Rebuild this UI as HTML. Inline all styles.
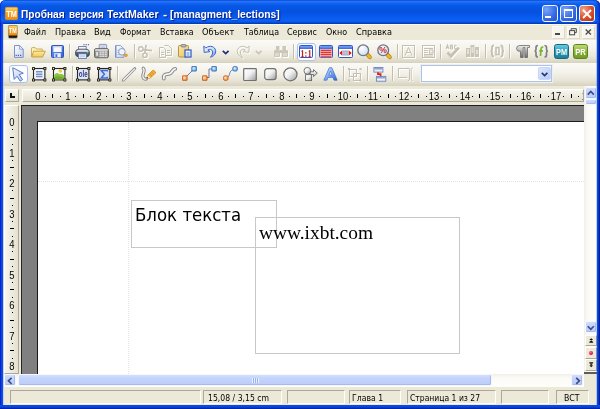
<!DOCTYPE html>
<html lang="ru">
<head>
<meta charset="utf-8">
<title>TextMaker</title>
<style>
html,body{margin:0;padding:0;}
body{width:600px;height:409px;overflow:hidden;background:#ece9d8;font-family:"DejaVu Sans Condensed","DejaVu Sans","Liberation Sans",sans-serif;font-size:11px;color:#000;}
#win{will-change:transform;position:relative;width:600px;height:409px;overflow:hidden;background:#ece9d8;}
.abs{position:absolute;}
svg{position:absolute;overflow:visible;}
.tw{display:inline-block;vertical-align:top;height:14px;}
.sx{display:inline-block;transform-origin:0 0;white-space:nowrap;}
#bl{left:0;top:23px;width:4px;height:386px;background:linear-gradient(to right,#0424d2 0,#0424d2 1px,#0a44e4 1px,#0a44e4 2px,#0c4ee8 2px,#0c4ee8 3px,rgba(12,78,232,0.15) 3px);}
#br{left:596px;top:23px;width:4px;height:386px;background:linear-gradient(to right,rgba(12,78,232,0.25) 0,rgba(12,78,232,0.25) 1px,#0a48e8 1px,#0a48e8 2px,#0838c8 2px,#0838c8 3px,#001c98 3px);}
#bb{left:0;top:404.6px;width:600px;height:4.4px;background:linear-gradient(to bottom,#0a4ae8 0,#0a48e4 35%,#0838c8 65%,#001c98 100%);}
#title{left:0;top:0;width:600px;height:23.5px;border-radius:5.5px 5.5px 0 0;box-shadow:inset 1px 0 0 #0831d9,inset -1px 0 0 #0a30c0,inset -3px 0 2px -1px #0a3cc8;
background:linear-gradient(to bottom,#0a46d6 0%,#2474f8 6%,#1a6cf6 10%,#0c5eec 18%,#0656e4 28%,#0551e0 50%,#0858ea 68%,#0b62f4 86%,#0a58e6 91%,#0844c4 96%,#0836ac 100%);}
.ttext{top:7px;color:#fff;font-family:"Liberation Sans",sans-serif;font-weight:bold;font-size:11.5px;white-space:nowrap;text-shadow:1px 1px 1px #0a1883;line-height:14px;}
.cb{top:5px;width:16.5px;height:16.5px;border:1px solid #f4f7ff;border-radius:3px;box-sizing:border-box;background:radial-gradient(circle at 25% 25%,#7aa6fa 0,#3a6ee6 55%,#2450cc 100%);}
#cclose{background:radial-gradient(circle at 25% 25%,#f0a58e 0,#da5330 50%,#b8310f 100%);}
#menu{left:3px;top:23.5px;width:594px;height:16.5px;background:#ece9d8;border-top:1px solid #f8f7f0;box-sizing:border-box;}
.mi{top:25px;font-size:9.2px;line-height:13px;white-space:nowrap;}
.tb{left:3px;width:594px;background:linear-gradient(to bottom,#fbfaf7 0,#f3f1e8 45%,#e8e5d7 75%,#d6d2bf 100%);}
#tb1{top:40px;height:23px;}
#tb2{top:63px;height:23px;}
.sep{width:1px;height:15px;background:#c2bfae;border-right:1px solid #fbfaf6;}
#rulerrow{left:3px;top:86px;width:594px;height:19px;background:#ece9d8;}
#hruler{left:22px;top:89px;width:562px;height:13px;background:linear-gradient(to bottom,#f7f6ee,#e4e1d0);border:1px solid #fff;border-right-color:#aca899;border-bottom-color:#aca899;box-sizing:border-box;overflow:hidden;}
#vruler{left:4px;top:105px;width:15px;height:269px;background:linear-gradient(to right,#f7f6ee,#e4e1d0);border:1px solid #fff;border-right-color:#aca899;border-bottom-color:#aca899;box-sizing:border-box;overflow:hidden;}
#lbtn{left:5px;top:89px;width:14px;height:13px;background:linear-gradient(to bottom,#f7f6ee,#e4e1d0);border:1px solid #fff;border-right-color:#aca899;border-bottom-color:#aca899;box-sizing:border-box;}
.rn{font-family:"Liberation Sans",sans-serif;font-size:10.5px;line-height:10px;color:#000;white-space:nowrap;text-align:center;width:20px;transform:scaleX(0.9);}
#gray{left:21px;top:105px;width:563px;height:269px;background:#808080;border-left:1px solid #262626;border-top:1px solid #1c1c1c;box-sizing:border-box;}
#page{left:37px;top:121px;width:547px;height:253px;background:#fff;border-left:1px solid #1a1a1a;border-top:1px solid #1a1a1a;box-sizing:border-box;}
#vs{left:584px;top:86px;width:13px;height:288px;background:linear-gradient(to right,#f1efe8 0,#fbfaf6 30%,#fefefb 100%);}
#hs{left:4px;top:374px;width:580px;height:13px;background:linear-gradient(to bottom,#f1efe8 0,#fbfaf6 30%,#fefefb 100%);}
.sbtn{background:linear-gradient(to bottom,#d2defd 0,#c4d3fb 35%,#bccdf8 100%);border:1px solid #f4f7ff;border-radius:2px;box-sizing:border-box;box-shadow:inset -1px -1px 0 #a6baee;}
#status{left:3px;top:387px;width:594px;height:18px;background:#ece9d8;}
.sp{top:390px;height:14px;border:1px solid #aca899;border-right-color:#fff;border-bottom-color:#fff;box-sizing:border-box;font-size:9.8px;line-height:12px;padding-left:0;white-space:nowrap;overflow:hidden;}
.st{top:391.6px;font-size:9.3px;line-height:12px;white-space:nowrap;}
.fr{border:1px solid #c8c8c8;box-sizing:border-box;}
.selbtn{box-sizing:border-box;border:1px solid #a9c1f0;border-radius:3px;background:#fdfdff;}
.ic{position:absolute;overflow:visible;}
.mdi{top:25.7px;width:13px;height:13px;box-sizing:border-box;background:#f6f5ee;border:1px solid #fbfaf6;border-right-color:#dcd9c8;border-bottom-color:#dcd9c8;}
</style>
</head>
<body>
<div id="win">
<div class="abs" style="left:0;top:0;width:600px;height:8px;background:#fff"></div>
<div id="title" class="abs"></div>
<div class="abs ttext" style="left:21px;width:400px;height:14px"><span class="tw" style="width:44.3px"><span class="sx ttx" style="transform:scaleX(0.883)">Пробная</span></span> <span class="tw" style="width:35.4px"><span class="sx ttx" style="transform:scaleX(0.859)">версия</span></span> <span class="tw" style="width:52.8px"><span class="sx ttx" style="transform:scaleX(0.921)">TextMaker</span></span> <span class="tw" style="width:3.8px"><span class="sx ttx" style="transform:scaleX(1.094)">-</span></span> <span class="tw" style="width:108.9px"><span class="sx ttx" style="transform:scaleX(0.899)">[managment_lections]</span></span></div>
<div id="menu" class="abs"></div>
<div class="abs cb" style="left:541.5px"></div>
<div class="abs cb" style="left:560px"></div>
<div class="abs cb" id="cclose" style="left:578.5px"></div>
<div class="abs" style="left:545px;top:15.5px;width:6px;height:2.4px;background:#fff"></div>
<div class="abs" style="left:563.5px;top:8.5px;width:9px;height:9px;box-sizing:border-box;border:1px solid #fff;border-top-width:2.4px"></div>
<svg class="ic" style="left:582px;top:8.5px" width="10" height="10" viewBox="0 0 10 10"><path d="M1 1L9 9M9 1L1 9" stroke="#fff" stroke-width="1.9"/></svg>
<svg class="ic" style="left:5px;top:6.5px" width="13" height="13" viewBox="0 0 13 13"><defs><linearGradient id="gtm" x1="0" y1="0" x2="0" y2="1"><stop offset="0" stop-color="#fdd36a"/><stop offset="0.45" stop-color="#f9a424"/><stop offset="1" stop-color="#f08c10"/></linearGradient></defs><rect x="0.3" y="0.3" width="12.4" height="12.4" rx="1.4" fill="url(#gtm)" stroke="#e89018" stroke-width="0.6"/><text x="6.5" y="10.3" font-family="Liberation Sans,sans-serif" font-weight="bold" font-size="9.5" fill="#fff" text-anchor="middle" textLength="10.6" lengthAdjust="spacingAndGlyphs">TM</text></svg>
<svg class="ic" style="left:7.7px;top:25.2px" width="10" height="14" viewBox="0 0 10 14"><rect x="0.3" y="0.3" width="9.2" height="13" rx="1.4" fill="#1a1a1a" stroke="#b8b8b0" stroke-width="0.6"/><rect x="0.6" y="0.8" width="8.6" height="9.6" rx="1" fill="url(#gtm)"/><text x="4.9" y="8.4" font-family="Liberation Sans,sans-serif" font-weight="bold" font-size="7" fill="#fff" text-anchor="middle" textLength="7.6" lengthAdjust="spacingAndGlyphs">TM</text></svg>
<div class="abs mdi" style="left:551.5px"></div><div class="abs mdi" style="left:567px"></div><div class="abs mdi" style="left:582px"></div>
<div class="abs" style="left:555px;top:33.3px;width:5px;height:1.6px;background:#4a4a4a"></div>
<svg class="ic" style="left:569px;top:27.8px" width="8" height="8" viewBox="0 0 8 8"><path d="M2.2 2V0.7H7.3V4.6H5.6" fill="none" stroke="#4a4a4a" stroke-width="1"/><rect x="0.6" y="2.6" width="5" height="4.2" fill="none" stroke="#4a4a4a" stroke-width="1"/></svg>
<svg class="ic" style="left:585.3px;top:29px" width="7" height="6" viewBox="0 0 7 6"><path d="M0.7 0.5L5.9 5.5M5.9 0.5L0.7 5.5" stroke="#4a4a4a" stroke-width="1.35"/></svg>
<div class="abs mi" style="left:24.0px;top:24.6px;"><span class="sx" style="transform:scaleX(0.964)">Файл</span></div>
<div class="abs mi" style="left:54.7px;top:24.6px;"><span class="sx" style="transform:scaleX(0.981)">Правка</span></div>
<div class="abs mi" style="left:94.0px;top:24.6px;"><span class="sx" style="transform:scaleX(1.007)">Вид</span></div>
<div class="abs mi" style="left:119.7px;top:24.6px;"><span class="sx" style="transform:scaleX(0.92)">Формат</span></div>
<div class="abs mi" style="left:159.7px;top:24.6px;"><span class="sx" style="transform:scaleX(0.96)">Вставка</span></div>
<div class="abs mi" style="left:202.4px;top:24.6px;"><span class="sx" style="transform:scaleX(0.996)">Объект</span></div>
<div class="abs mi" style="left:244.0px;top:24.6px;"><span class="sx" style="transform:scaleX(0.957)">Таблица</span></div>
<div class="abs mi" style="left:287.4px;top:24.6px;"><span class="sx" style="transform:scaleX(0.965)">Сервис</span></div>
<div class="abs mi" style="left:326.4px;top:24.6px;"><span class="sx" style="transform:scaleX(0.965)">Окно</span></div>
<div class="abs mi" style="left:356.4px;top:24.6px;"><span class="sx" style="transform:scaleX(0.988)">Справка</span></div>
<div id="tb1" class="abs tb"></div>
<div id="tb2" class="abs tb"></div>
<svg width="0" height="0" style="position:absolute"><defs>
<linearGradient id="gdoc" x1="0" y1="0" x2="1" y2="1"><stop offset="0" stop-color="#ffffff"/><stop offset="1" stop-color="#c3d2f2"/></linearGradient>
<linearGradient id="gfold" x1="0" y1="0" x2="0" y2="1"><stop offset="0" stop-color="#fdee9e"/><stop offset="1" stop-color="#f1c652"/></linearGradient>
<linearGradient id="gsave" x1="0" y1="0" x2="1" y2="1"><stop offset="0" stop-color="#6a98f4"/><stop offset="1" stop-color="#3560cc"/></linearGradient>
<linearGradient id="gshape" x1="0" y1="0" x2="1" y2="1"><stop offset="0" stop-color="#ffffff"/><stop offset="0.45" stop-color="#f2f2f2"/><stop offset="1" stop-color="#9a9a9a"/></linearGradient>
<linearGradient id="gmetal" x1="0" y1="0" x2="0" y2="1"><stop offset="0" stop-color="#f0f0f0"/><stop offset="0.5" stop-color="#acacac"/><stop offset="1" stop-color="#686868"/></linearGradient>
<linearGradient id="gpm" x1="0" y1="0" x2="0" y2="1"><stop offset="0" stop-color="#6cd0e4"/><stop offset="0.5" stop-color="#2c9cb8"/><stop offset="1" stop-color="#1e7c94"/></linearGradient>
<linearGradient id="gpr" x1="0" y1="0" x2="0" y2="1"><stop offset="0" stop-color="#c4dc78"/><stop offset="0.5" stop-color="#8cb43c"/><stop offset="1" stop-color="#6c9824"/></linearGradient>
<linearGradient id="gwin" x1="0" y1="0" x2="0" y2="1"><stop offset="0" stop-color="#7aa6fa"/><stop offset="1" stop-color="#3a68dc"/></linearGradient>
<radialGradient id="glens" cx="0.35" cy="0.3" r="0.8"><stop offset="0" stop-color="#ffffff"/><stop offset="1" stop-color="#c8dcf4"/></radialGradient>
<linearGradient id="gA" x1="0" y1="0" x2="1" y2="1"><stop offset="0" stop-color="#e0ecff"/><stop offset="0.5" stop-color="#7cacf4"/><stop offset="1" stop-color="#2c5cc4"/></linearGradient>
<radialGradient id="gor" cx="0.4" cy="0.4" r="0.7"><stop offset="0" stop-color="#ffe8b8"/><stop offset="1" stop-color="#ec7c30"/></radialGradient>
<radialGradient id="gbl" cx="0.4" cy="0.4" r="0.7"><stop offset="0" stop-color="#d8f4ff"/><stop offset="1" stop-color="#4ca0e8"/></radialGradient>
<linearGradient id="gundo" x1="0" y1="0" x2="1" y2="1"><stop offset="0" stop-color="#ffffff"/><stop offset="0.55" stop-color="#c4dafa"/><stop offset="1" stop-color="#6c9cec"/></linearGradient>
<linearGradient id="garrow" x1="0" y1="0" x2="1" y2="1"><stop offset="0" stop-color="#f4f8ff"/><stop offset="1" stop-color="#b0c6f0"/></linearGradient>
<linearGradient id="gclip" x1="0" y1="0" x2="1" y2="1"><stop offset="0" stop-color="#fbeaa6"/><stop offset="1" stop-color="#e6c062"/></linearGradient>
<linearGradient id="gprn" x1="0" y1="0" x2="0" y2="1"><stop offset="0" stop-color="#f2f4f8"/><stop offset="0.3" stop-color="#d0d4de"/><stop offset="0.42" stop-color="#5c6478"/><stop offset="1" stop-color="#424a5e"/></linearGradient>
<linearGradient id="gcombo" x1="0" y1="0" x2="0" y2="1"><stop offset="0" stop-color="#dbe6fe"/><stop offset="1" stop-color="#b4c8f8"/></linearGradient>
</defs></svg>
<svg class="ic" style="left:13.6px;top:45px" width="10" height="13" viewBox="0 0 10 13" ><path d="M0.5 0.5H5.6L9.2 4.2V12.4H0.5Z" fill="url(#gdoc)" stroke="#7f8fc6"/><path d="M5.6 0.5V4.2H9.2Z" fill="#f6f8ff" stroke="#7f8fc6" stroke-width="0.8" stroke-linejoin="round"/><path d="M1.6 10.4h6.6" stroke="#4a5aa0" stroke-width="1.2" stroke-dasharray="1.2 1"/></svg>
<svg class="ic" style="left:30.5px;top:46.6px" width="15" height="11" viewBox="0 0 15 11" ><path d="M0.5 9.5V1.5Q0.5 0.6 1.4 0.6H4.2L5.4 2H11.2V4.2" fill="#fdf1b6" stroke="#c9a352" stroke-width="0.9"/><path d="M0.7 10L2.6 4.2H14.3L11.6 10Z" fill="url(#gfold)" stroke="#c39a3c" stroke-width="0.9" stroke-linejoin="round"/></svg>
<svg class="ic" style="left:51px;top:45px" width="13" height="13" viewBox="0 0 13 13" ><rect x="0.5" y="0.5" width="12" height="12" rx="1" fill="url(#gsave)" stroke="#2f55bc"/><rect x="2.4" y="1" width="8.2" height="6" fill="#f6f8fc"/><rect x="2.4" y="1" width="8.2" height="1.4" fill="#ccd2de"/><rect x="3.2" y="8.2" width="6.6" height="4.3" fill="#eef2fa"/><rect x="4.4" y="9.2" width="2" height="2.8" fill="#4a74d8"/></svg>
<div class="abs sep" style="left:69px;top:44px"></div>
<svg class="ic" style="left:75px;top:44px" width="15" height="15" viewBox="0 0 15 15" ><path d="M8.4 0.8h1.2M10.6 0.8h1.2M12.8 0.8h1.2" stroke="#34509c" stroke-width="1.1"/><rect x="3.6" y="2.6" width="7.6" height="4" fill="#f4f7fd" stroke="#5c6c9c" stroke-width="0.8"/><rect x="0.5" y="5.2" width="14" height="7.6" rx="3.4" fill="url(#gprn)" stroke="#3a4258" stroke-width="0.9"/><rect x="3.4" y="9.8" width="8" height="4.6" fill="#e6eefb" stroke="#5470b8" stroke-width="0.8"/><rect x="4.6" y="11.2" width="5.6" height="2" fill="#c4d2ee"/><rect x="11.6" y="8" width="1.6" height="1.3" fill="#48c848"/></svg>
<svg class="ic" style="left:94.4px;top:44px" width="15" height="14.2" viewBox="0 0 15 14.2" ><rect x="5.2" y="0.4" width="7.4" height="6" rx="0.6" fill="#dfe7f4" stroke="#7c86a0" stroke-width="0.8"/><path d="M6.6 2h4.6M6.6 3.6h4.6" stroke="#aab4cc" stroke-width="0.7"/><rect x="0.5" y="4.6" width="14" height="9.2" rx="1.6" fill="#9c9c9c" stroke="#5e5e5e" stroke-width="0.9"/><rect x="1" y="5" width="13" height="2" rx="1" fill="#cfcfcf"/><rect x="1.8" y="7.6" width="2.6" height="4.6" rx="0.6" fill="#ececec" stroke="#6a6a6a" stroke-width="0.5"/><g fill="#dcdcdc"><rect x="5.6" y="7.4" width="2" height="1.5"/><rect x="8.2" y="7.4" width="2" height="1.5"/><rect x="10.8" y="7.4" width="2" height="1.5"/><rect x="5.6" y="9.5" width="2" height="1.5"/><rect x="8.2" y="9.5" width="2" height="1.5"/><rect x="10.8" y="9.5" width="2" height="1.5"/><rect x="5.6" y="11.6" width="2" height="1.5"/><rect x="8.2" y="11.6" width="2" height="1.5"/><rect x="10.8" y="11.6" width="2" height="1.5"/></g></svg>
<svg class="ic" style="left:115px;top:45px" width="13" height="13.4" viewBox="0 0 13 13.4" ><path d="M0.5 0.5H5.6L9 3.9V12.4H0.5Z" fill="url(#gdoc)" stroke="#8797c4" stroke-width="0.9"/><path d="M1 1V12" stroke="#5878c8" stroke-width="0.8"/><path d="M2.4 5.5h2.4M2.4 7.5h2M2.4 9.5h2.6" stroke="#a8b4d4" stroke-width="0.8"/><circle cx="6.9" cy="6.8" r="3.3" fill="#eef5ff" stroke="#8494b8" stroke-width="0.9"/><circle cx="11" cy="10.3" r="1.4" fill="#f4a820" stroke="#c88010" stroke-width="0.5"/></svg>
<div class="abs sep" style="left:134px;top:44px"></div>
<svg class="ic" style="left:138px;top:44px" width="15" height="15" viewBox="0 0 15 15" ><g transform="translate(1,1)" stroke="#ffffff" fill="none"><circle cx="2.8" cy="5" r="2.2" stroke-width="1.4"/><circle cx="7" cy="11.2" r="2.2" stroke-width="1.4"/><path d="M4.8 5.6L14 6.6M6.8 9L8.2 0.8" stroke-width="1.6"/></g><g stroke="#c4c1b0" fill="none"><circle cx="2.8" cy="5" r="2.2" stroke-width="1.4"/><circle cx="7" cy="11.2" r="2.2" stroke-width="1.4"/><path d="M4.8 5.6L14 6.6M6.8 9L8.2 0.8" stroke-width="1.6"/></g></svg>
<svg class="ic" style="left:159px;top:45px" width="13" height="13" viewBox="0 0 13 13" ><g transform="translate(1,1)" stroke="#ffffff" fill="none"><path d="M0.5 2.5H4.5L6.5 4.5V12.5H0.5Z"/><path d="M5.5 0.5H9.5L12.5 3.5V10.5H6.5"/><path d="M2 7.5h3M2 9.5h3M8 5.5h3M8 7.5h3"/></g><g stroke="#c4c1b0" fill="none"><path d="M0.5 2.5H4.5L6.5 4.5V12.5H0.5Z"/><path d="M5.5 0.5H9.5L12.5 3.5V10.5H6.5"/><path d="M2 7.5h3M2 9.5h3M8 5.5h3M8 7.5h3"/></g></svg>
<svg class="ic" style="left:178px;top:44px" width="14" height="14" viewBox="0 0 14 14" ><rect x="0.5" y="1.5" width="10" height="11.5" rx="1" fill="url(#gclip)" stroke="#b8923c"/><rect x="3" y="0.5" width="5" height="2.5" rx="1" fill="#b8b8c0" stroke="#70707c" stroke-width="0.7"/><rect x="7" y="6" width="6" height="7" fill="#f2f6ff" stroke="#3463cc" stroke-width="1.3"/><path d="M8.6 9h2.8M8.6 11h2.8" stroke="#3463cc" stroke-width="0.8"/></svg>
<svg class="ic" style="left:203px;top:45px" width="14" height="13" viewBox="0 0 14 13" ><path d="M0.8 1.2L1.2 7.4L7 6.6L4.8 4.9C7.5 3.4 10 5 9.6 8C9.3 10 8.2 11.2 7.4 12.2C10.5 11.5 13 9 12.6 5.6C12.1 1.6 7 -0.2 2.9 3Z" fill="url(#gundo)" stroke="#3462cc" stroke-width="1" stroke-linejoin="round"/></svg>
<svg class="ic" style="left:222px;top:50px" width="8" height="5" viewBox="0 0 8 5" ><path d="M0.8 0.8L3.7 3.6L6.6 0.8" fill="none" stroke="#1c2f7c" stroke-width="1.7"/></svg>
<svg class="ic" style="left:236px;top:45px" width="15" height="14" viewBox="0 0 15 14" ><g transform="translate(1,1)" stroke="#ffffff" fill="none"><path d="M13.2 1.2L12.8 7.4L7 6.6L9.2 4.9C6.5 3.4 4 5 4.4 8C4.7 10 5.8 11.2 6.6 13C3.5 11.5 1 9 1.4 5.6C1.9 1.6 7 -0.2 11.1 3Z"/></g><g stroke="#c4c1b0" fill="none"><path d="M13.2 1.2L12.8 7.4L7 6.6L9.2 4.9C6.5 3.4 4 5 4.4 8C4.7 10 5.8 11.2 6.6 13C3.5 11.5 1 9 1.4 5.6C1.9 1.6 7 -0.2 11.1 3Z"/></g></svg>
<svg class="ic" style="left:255px;top:50px" width="8" height="5" viewBox="0 0 8 5" ><path d="M0.8 0.8L3.7 3.6L6.6 0.8" fill="none" stroke="#c9c6b6" stroke-width="1.7"/></svg>
<svg class="ic" style="left:274px;top:46px" width="15" height="12" viewBox="0 0 15 12" ><g transform="translate(1,1)" fill="#ffffff"><rect x="0" y="4" width="6" height="7"/><rect x="8" y="4" width="6" height="7"/><rect x="2" y="0" width="3.5" height="4"/><rect x="8.5" y="0" width="3.5" height="4"/></g><g fill="#cbc8b8"><rect x="0" y="4" width="6" height="7" rx="1"/><rect x="8" y="4" width="6" height="7" rx="1"/><rect x="2" y="0" width="3.5" height="4"/><rect x="8.5" y="0" width="3.5" height="4"/><rect x="6" y="4" width="2" height="3"/></g><rect x="1" y="7" width="4" height="3" fill="#dcdacc"/><rect x="9" y="7" width="4" height="3" fill="#dcdacc"/></svg>
<div class="abs sep" style="left:293px;top:44px"></div>
<div class="abs selbtn" style="left:297px;top:43px;width:19px;height:18px"></div>
<svg class="ic" style="left:299px;top:45px" width="14" height="13" viewBox="0 0 14 13" ><rect x="0.5" y="0.5" width="13" height="12" rx="1" fill="#fff" stroke="#3158c2"/><rect x="1" y="1" width="12" height="3" fill="url(#gwin)"/><text x="7" y="11.6" font-family="Liberation Serif,serif" font-weight="bold" font-size="9.5" fill="#d81818" text-anchor="middle" textLength="11.4" lengthAdjust="spacingAndGlyphs">1:1</text></svg>
<svg class="ic" style="left:319px;top:45px" width="14" height="13" viewBox="0 0 14 13" ><rect x="0.5" y="0.5" width="13" height="12" rx="1" fill="#fff" stroke="#3158c2"/><rect x="1" y="1" width="12" height="3" fill="url(#gwin)"/><rect x="1" y="4" width="12" height="8.2" fill="#f6c4c4"/><path d="M1.6 5.4h10.8M1.6 7.4h10.8M1.6 9.4h10.8M1.6 11.3h10.8" stroke="#e23434" stroke-width="1.1"/></svg>
<svg class="ic" style="left:338px;top:45px" width="15" height="13" viewBox="0 0 15 13" ><rect x="0.5" y="0.5" width="14" height="12" rx="1" fill="#fff" stroke="#3158c2"/><rect x="1" y="1" width="13" height="3" fill="url(#gwin)"/><rect x="4.6" y="5.2" width="5.8" height="5.8" fill="#e4e8f0"/><path d="M4.8 6.2h5.4M4.8 8h5.4M4.8 9.8h5.4" stroke="#8c94ac" stroke-width="0.9"/><path d="M1.3 8L4.3 5.3V10.7Z" fill="#e01818"/><path d="M13.7 8L10.7 5.3V10.7Z" fill="#e01818"/></svg>
<svg class="ic" style="left:357px;top:44px" width="15" height="15" viewBox="0 0 15 15" ><path d="M10.2 10.4L12.8 13.2" stroke="#c08410" stroke-width="4" stroke-linecap="round"/><path d="M10.2 10.4L12.8 13.2" stroke="#f4b830" stroke-width="2.4" stroke-linecap="round"/><circle cx="6.2" cy="6.3" r="5.4" fill="url(#glens)" stroke="#6c7480" stroke-width="1.3"/></svg>
<svg class="ic" style="left:377px;top:44px" width="15" height="15" viewBox="0 0 15 15" ><path d="M10.2 10.4L12.8 13.2" stroke="#c08410" stroke-width="4" stroke-linecap="round"/><path d="M10.2 10.4L12.8 13.2" stroke="#f4b830" stroke-width="2.4" stroke-linecap="round"/><circle cx="6.2" cy="6.3" r="5.4" fill="url(#glens)" stroke="#6c7480" stroke-width="1.3"/><text x="6.1" y="9.4" font-family="Liberation Sans,sans-serif" font-weight="bold" font-size="8.5" fill="#d02020" text-anchor="middle">%</text></svg>
<div class="abs sep" style="left:397px;top:44px"></div>
<svg class="ic" style="left:402px;top:45px" width="14" height="14" viewBox="0 0 14 14" ><g transform="translate(1,1)" stroke="#ffffff" fill="none"><rect x="0.5" y="0.5" width="12" height="12"/><path d="M3 10.5L6.5 2.5L10 10.5M4.3 7.5h4.4"/></g><g stroke="#c4c1b0" fill="none"><rect x="0.5" y="0.5" width="12" height="12"/><path d="M3 10.5L6.5 2.5L10 10.5M4.3 7.5h4.4"/></g></svg>
<svg class="ic" style="left:422px;top:45px" width="14" height="14" viewBox="0 0 14 14" ><g transform="translate(1,1)" stroke="#ffffff" fill="none"><rect x="0.5" y="0.5" width="12" height="12"/><path d="M2 3.5h9M2 5.5h4M2 7.5h4M2 9.5h9M2 11h9"/><rect x="7.5" y="5" width="3.5" height="3"/></g><g stroke="#c4c1b0" fill="none"><rect x="0.5" y="0.5" width="12" height="12"/><path d="M2 3.5h9M2 5.5h4M2 7.5h4M2 9.5h9M2 11h9"/><rect x="7.5" y="5" width="3.5" height="3"/></g></svg>
<div class="abs sep" style="left:440px;top:44px"></div>
<svg class="ic" style="left:445px;top:44px" width="16" height="15" viewBox="0 0 16 15" ><g transform="translate(1,1)" stroke="#ffffff" fill="none"><path d="M1 5L2.5 1L4 5M1.6 3.6h1.8M5.5 1v4M5.5 1h1.5q1 1 0 2h-1.5M7 3q1.2 1 0 2h-1.5M11.5 1.5q-2-1-2 1.5t2 1.5" stroke-width="1.1"/><path d="M2.5 8.6L6 12.2L13.8 3.6" stroke-width="2.8"/></g><g stroke="#c4c1b0" fill="none"><path d="M1 5L2.5 1L4 5M1.6 3.6h1.8M5.5 1v4M5.5 1h1.5q1 1 0 2h-1.5M7 3q1.2 1 0 2h-1.5M11.5 1.5q-2-1-2 1.5t2 1.5" stroke-width="1.1"/><path d="M2.5 8.6L6 12.2L13.8 3.6" stroke-width="2.8"/></g></svg>
<svg class="ic" style="left:466px;top:45px" width="14" height="13" viewBox="0 0 14 13" ><g transform="translate(1,1)" fill="#ffffff"><rect x="0" y="3" width="4" height="9"/><rect x="4.5" y="0" width="4" height="12"/><rect x="9" y="2" width="4" height="10"/></g><g fill="#c8c5b4"><rect x="0" y="3" width="4" height="9"/><rect x="4.5" y="0" width="4" height="12"/><rect x="9" y="2" width="4" height="10"/></g><g fill="#e4e2d6"><rect x="1" y="4" width="2" height="5"/><rect x="5.5" y="2" width="2" height="6"/><rect x="10" y="5" width="2" height="4"/></g></svg>
<div class="abs sep" style="left:485px;top:44px"></div>
<svg class="ic" style="left:490px;top:45px" width="15" height="13" viewBox="0 0 15 13" ><g transform="translate(1,1)" stroke="#ffffff" fill="none"><path d="M4 0.5q-2 0-2 2v2q0 1.5-1.5 1.5q1.5 0 1.5 1.5v2q0 2 2 2M10.5 0.5q2 0 2 2v2q0 1.5 1.5 1.5q-1.5 0-1.5 1.5v2q0 2-2 2" stroke-width="1.9"/><rect x="6" y="2.6" width="3" height="7" stroke-width="1.6"/></g><g stroke="#c4c1b0" fill="none"><path d="M4 0.5q-2 0-2 2v2q0 1.5-1.5 1.5q1.5 0 1.5 1.5v2q0 2 2 2M10.5 0.5q2 0 2 2v2q0 1.5 1.5 1.5q-1.5 0-1.5 1.5v2q0 2-2 2" stroke-width="1.9"/><rect x="6" y="2.6" width="3" height="7" stroke-width="1.6"/></g></svg>
<div class="abs sep" style="left:509px;top:44px"></div>
<svg class="ic" style="left:516px;top:45px" width="14" height="13" viewBox="0 0 14 13" ><path d="M0.5 3.5Q0.5 0.5 4 0.5H13.5V2.5H11.5V12.5H8.8V2.5H7.2V12.5H4.5V6.5Q0.5 6.5 0.5 3.5Z" fill="url(#gmetal)" stroke="#6a6a6a" stroke-width="0.8"/></svg>
<svg class="ic" style="left:534px;top:45px" width="15" height="13" viewBox="0 0 15 13" ><path d="M4 0.5q-2 0-2 2v2q0 1.5-1.5 1.5q1.5 0 1.5 1.5v2.5q0 2 2 2M10.5 0.5q2 0 2 2v2q0 1.5 1.5 1.5q-1.5 0-1.5 1.5v2.5q0 2-2 2" fill="none" stroke="#808080" stroke-width="1.7"/><path d="M9.3 2.4Q7.2 1.6 7 4.2L6.5 11M5.2 5.8h3.8" fill="none" stroke="#74b830" stroke-width="1.7"/></svg>
<svg class="ic" style="left:554px;top:44px" width="15" height="15" viewBox="0 0 15 15" ><rect x="0.5" y="0.5" width="14" height="14" rx="2.2" fill="url(#gpm)" stroke="#186880"/><text x="7.5" y="11" font-family="Liberation Sans,sans-serif" font-weight="bold" font-size="9.5" fill="#fff" text-anchor="middle" textLength="11" lengthAdjust="spacingAndGlyphs">PM</text></svg>
<svg class="ic" style="left:573px;top:44px" width="15" height="15" viewBox="0 0 15 15" ><rect x="0.5" y="0.5" width="14" height="14" rx="2.2" fill="url(#gpr)" stroke="#5a8420"/><text x="7.5" y="11" font-family="Liberation Sans,sans-serif" font-weight="bold" font-size="9.5" fill="#fff" text-anchor="middle" textLength="10.5" lengthAdjust="spacingAndGlyphs">PR</text></svg>
<div class="abs selbtn" style="left:9px;top:65px;width:19px;height:18px"></div>
<svg class="ic" style="left:12px;top:67px" width="12" height="15" viewBox="0 0 12 15" ><path d="M0.7 0.7L11.3 6.2L7.2 7.6L10.6 12.6L8.2 14.2L5 9.2L2.2 12.4Z" fill="url(#garrow)" stroke="#5a7aca" stroke-width="1" stroke-linejoin="round"/></svg>
<svg class="ic" style="left:31.5px;top:67px" width="15" height="15" viewBox="0 0 15 15" ><rect x="1.5" y="1.5" width="11.4" height="11.4" fill="#eef2fc" stroke="#262626" stroke-width="1.1"/><path d="M4 4.8h6.4M4 7.2h6.4M4 9.6h6.4" stroke="#7c90c0" stroke-width="1.5"/><rect x="0" y="0" width="3" height="3" rx="0.6" fill="#1c1c1c"/><rect x="0.9" y="0.9" width="1.2" height="1.3" fill="#f8e468"/><rect x="0" y="11.4" width="3" height="3" rx="0.6" fill="#1c1c1c"/><rect x="0.9" y="12.3" width="1.2" height="1.3" fill="#f8e468"/><rect x="11.4" y="0" width="3" height="3" rx="0.6" fill="#1c1c1c"/><rect x="12.3" y="0.9" width="1.2" height="1.3" fill="#f8e468"/><rect x="11.4" y="11.4" width="3" height="3" rx="0.6" fill="#1c1c1c"/><rect x="12.3" y="12.3" width="1.2" height="1.3" fill="#f8e468"/></svg>
<svg class="ic" style="left:51.5px;top:67px" width="15" height="15" viewBox="0 0 15 15" ><rect x="1.5" y="1.5" width="11.4" height="11.4" fill="#f4f8ff" stroke="#262626" stroke-width="1.1"/><path d="M2.2 12.2V8Q4.6 4.6 7.4 7.2Q9.6 5.6 12.2 8.6V12.2Z" fill="#8cc440"/><path d="M2.2 12.2V10.5Q6 8 12.2 11V12.2Z" fill="#74ac2c"/><circle cx="8.3" cy="3.9" r="1.8" fill="#f8cc44"/><rect x="0" y="0" width="3" height="3" rx="0.6" fill="#1c1c1c"/><rect x="0.9" y="0.9" width="1.2" height="1.3" fill="#f8e468"/><rect x="0" y="11.4" width="3" height="3" rx="0.6" fill="#1c1c1c"/><rect x="0.9" y="12.3" width="1.2" height="1.3" fill="#f8e468"/><rect x="11.4" y="0" width="3" height="3" rx="0.6" fill="#1c1c1c"/><rect x="12.3" y="0.9" width="1.2" height="1.3" fill="#f8e468"/><rect x="11.4" y="11.4" width="3" height="3" rx="0.6" fill="#1c1c1c"/><rect x="12.3" y="12.3" width="1.2" height="1.3" fill="#f8e468"/></svg>
<div class="abs sep" style="left:72px;top:66px"></div>
<svg class="ic" style="left:76.2px;top:67px" width="15" height="15" viewBox="0 0 15 15" ><rect x="1.5" y="1.5" width="11.4" height="11.4" fill="#dfe6f8" stroke="#262626" stroke-width="1.1"/><text x="7.2" y="10.3" font-family="Liberation Sans,sans-serif" font-weight="bold" font-size="8.6" fill="#2c3c80" text-anchor="middle" textLength="8.8" lengthAdjust="spacingAndGlyphs">ole</text><rect x="0" y="0" width="3" height="3" rx="0.6" fill="#1c1c1c"/><rect x="0.9" y="0.9" width="1.2" height="1.3" fill="#f8e468"/><rect x="0" y="11.4" width="3" height="3" rx="0.6" fill="#1c1c1c"/><rect x="0.9" y="12.3" width="1.2" height="1.3" fill="#f8e468"/><rect x="11.4" y="0" width="3" height="3" rx="0.6" fill="#1c1c1c"/><rect x="12.3" y="0.9" width="1.2" height="1.3" fill="#f8e468"/><rect x="11.4" y="11.4" width="3" height="3" rx="0.6" fill="#1c1c1c"/><rect x="12.3" y="12.3" width="1.2" height="1.3" fill="#f8e468"/></svg>
<svg class="ic" style="left:96.9px;top:67px" width="15" height="15" viewBox="0 0 15 15" ><rect x="1.5" y="1.5" width="11.4" height="11.4" fill="#d4dcf0" stroke="#262626" stroke-width="1.1"/><path d="M10.3 4.6V3.4H4.2L7.4 7.2L4.2 11H10.3V9.8" fill="none" stroke="#3c6cd8" stroke-width="1.5"/><rect x="0" y="0" width="3" height="3" rx="0.6" fill="#1c1c1c"/><rect x="0.9" y="0.9" width="1.2" height="1.3" fill="#f8e468"/><rect x="0" y="11.4" width="3" height="3" rx="0.6" fill="#1c1c1c"/><rect x="0.9" y="12.3" width="1.2" height="1.3" fill="#f8e468"/><rect x="11.4" y="0" width="3" height="3" rx="0.6" fill="#1c1c1c"/><rect x="12.3" y="0.9" width="1.2" height="1.3" fill="#f8e468"/><rect x="11.4" y="11.4" width="3" height="3" rx="0.6" fill="#1c1c1c"/><rect x="12.3" y="12.3" width="1.2" height="1.3" fill="#f8e468"/></svg>
<div class="abs sep" style="left:116.5px;top:66px"></div>
<svg class="ic" style="left:122px;top:67px" width="14" height="15" viewBox="0 0 14 15" ><path d="M1.2 13.2L12.8 1.6" stroke="#8c8c8c" stroke-width="2.8" stroke-linecap="round"/><path d="M1.4 13L12.6 1.8" stroke="#f8f8f8" stroke-width="1.2" stroke-linecap="round"/></svg>
<svg class="ic" style="left:141px;top:67px" width="16" height="14" viewBox="0 0 16 14" ><path d="M2.2 1.2C5 4 1 6.5 2 10C2.5 11.8 4 12.6 5.4 11.8" fill="none" stroke="#8a8a8a" stroke-width="3.2" stroke-linecap="round"/><path d="M2.2 1.2C5 4 1 6.5 2 10C2.5 11.8 4 12.6 5.4 11.8" fill="none" stroke="#f6f6f6" stroke-width="1.3" stroke-linecap="round"/><path d="M5.6 11.6L6.8 8.2L12.2 3L15 5.6L9.4 10.8Z" fill="#f4b030" stroke="#c07c14" stroke-width="0.7"/><path d="M8.4 6.6L11 9.2M10.2 4.8L12.9 7.4" stroke="#d08818" stroke-width="0.7"/><path d="M5.6 11.6L6.8 8.2L9.4 10.8Z" fill="#f6e2bc"/><path d="M5.6 11.6L6.1 10.1L7.2 11.1Z" fill="#202020"/></svg>
<svg class="ic" style="left:162px;top:67px" width="15" height="14" viewBox="0 0 15 14" ><path d="M1.8 11.6C1 5.5 6 8 8.5 6.2C11 4.4 10.5 2 13.2 1.8" fill="none" stroke="#8a8a8a" stroke-width="3.8" stroke-linecap="round"/><path d="M1.8 11.6C1 5.5 6 8 8.5 6.2C11 4.4 10.5 2 13.2 1.8" fill="none" stroke="#f8f8f8" stroke-width="1.8" stroke-linecap="round"/></svg>
<svg class="ic" style="left:182px;top:66.4px" width="15" height="15" viewBox="0 0 15 15" ><path d="M3.5 11.5L11.5 3.5" fill="none" stroke="#5c6c98" stroke-width="0.9"/><rect x="9.8" y="0.5" width="4.6" height="4.6" rx="0.3" fill="url(#gbl)" stroke="#3068b8" stroke-width="0.8"/><rect x="0.5" y="9.8" width="4.6" height="4.6" rx="0.3" fill="url(#gor)" stroke="#c85818" stroke-width="0.8"/></svg>
<svg class="ic" style="left:202px;top:66.4px" width="15" height="15" viewBox="0 0 15 15" ><path d="M3 11.5H7V3H11" fill="none" stroke="#5c6c98" stroke-width="0.9"/><rect x="9.8" y="0.5" width="4.6" height="4.6" rx="0.3" fill="url(#gbl)" stroke="#3068b8" stroke-width="0.8"/><rect x="0.5" y="9.8" width="4.6" height="4.6" rx="0.3" fill="url(#gor)" stroke="#c85818" stroke-width="0.8"/></svg>
<svg class="ic" style="left:222.5px;top:66.4px" width="15" height="15" viewBox="0 0 15 15" ><path d="M4 11.5C8 10 5 5 10.5 3.5" fill="none" stroke="#5c6c98" stroke-width="0.9"/><rect x="9.8" y="0.5" width="4.6" height="4.6" rx="1.6" fill="url(#gbl)" stroke="#3068b8" stroke-width="0.8"/><rect x="0.5" y="9.8" width="4.6" height="4.6" rx="1.6" fill="url(#gor)" stroke="#c85818" stroke-width="0.8"/></svg>
<svg class="ic" style="left:243px;top:67.6px" width="14" height="13" viewBox="0 0 14 13" ><rect x="0.7" y="0.7" width="12.6" height="11.8" rx="0.8" fill="url(#gshape)" stroke="#707070" stroke-width="1.2"/></svg>
<svg class="ic" style="left:264px;top:68px" width="13" height="12.4" viewBox="0 0 13 12.4" ><rect x="0.7" y="0.7" width="11.4" height="11" rx="2.6" fill="url(#gshape)" stroke="#707070" stroke-width="1.2"/></svg>
<svg class="ic" style="left:283px;top:67px" width="15" height="15" viewBox="0 0 15 15" ><ellipse cx="7.4" cy="7.3" rx="6.6" ry="6.5" fill="url(#gshape)" stroke="#707070" stroke-width="1.2"/></svg>
<svg class="ic" style="left:303px;top:67px" width="15" height="14" viewBox="0 0 15 14" ><circle cx="4.4" cy="3.8" r="3.4" fill="url(#gshape)" stroke="#686868" stroke-width="0.9"/><path d="M7.2 4.8H10.5V2.6L14.3 6.1L10.5 9.6V7.4H7.2Z" fill="url(#gshape)" stroke="#686868" stroke-width="0.9" stroke-linejoin="round"/><rect x="2.6" y="7.6" width="6" height="6" fill="url(#gshape)" stroke="#686868" stroke-width="0.9"/></svg>
<svg class="ic" style="left:323px;top:67px" width="15" height="14" viewBox="0 0 15 14" ><path d="M0.8 13.2L6.3 0.7H8.8L14.2 13.2H11L9.9 10.4H5L3.9 13.2Z M5.9 8H9L7.5 4Z" fill="url(#gA)" stroke="#3c6cd0" stroke-width="0.7" fill-rule="evenodd"/></svg>
<div class="abs sep" style="left:343px;top:66px"></div>
<svg class="ic" style="left:348px;top:67.5px" width="14" height="14" viewBox="0 0 14 14" ><g transform="translate(1,1)" stroke="#ffffff" fill="none"><rect x="1.5" y="1.5" width="7" height="7"/><rect x="5.5" y="5.5" width="7" height="7"/></g><g stroke="#c4c1b0" fill="none"><rect x="1.5" y="1.5" width="7" height="7"/><rect x="5.5" y="5.5" width="7" height="7"/></g><g fill="#c4c1b0"><rect x="0" y="0" width="2" height="2"/><rect x="11.5" y="0" width="2" height="2"/><rect x="0" y="11.5" width="2" height="2"/><rect x="11.5" y="11.5" width="2" height="2"/></g></svg>
<div class="abs sep" style="left:367px;top:66px"></div>
<svg class="ic" style="left:373px;top:66.8px" width="14" height="15" viewBox="0 0 14 15" ><rect x="0.9" y="0.5" width="9" height="4.6" fill="#eef2fa" stroke="#6c82b4" stroke-width="0.9"/><rect x="1.4" y="1" width="8" height="1.6" fill="#8ea4d4"/><rect x="3.4" y="9.4" width="9.4" height="4.8" fill="#eef2fa" stroke="#6c82b4" stroke-width="0.9"/><rect x="3.9" y="9.9" width="8.4" height="1.6" fill="#8ea4d4"/><path d="M5 5.2V7.2H7.6V9.2" fill="none" stroke="#e01c1c" stroke-width="1.7"/></svg>
<div class="abs sep" style="left:392.3px;top:66px"></div>
<svg class="ic" style="left:397.7px;top:67px" width="16" height="15" viewBox="0 0 16 15" ><g transform="translate(1,1)" stroke="#ffffff" fill="none"><path d="M0.5 1.5H11M0.5 1.5V10.5H9"/><path d="M10 0.5Q12.5 2 11.5 4.5V10Q12.5 12.5 10 14M14.5 0.5Q12.5 2 13.2 4.5V10Q12.5 12.5 14.5 14"/></g><g stroke="#c4c1b0" fill="none"><path d="M0.5 1.5H11M0.5 1.5V10.5H9"/><path d="M10 0.5Q12.5 2 11.5 4.5V10Q12.5 12.5 10 14M14.5 0.5Q12.5 2 13.2 4.5V10Q12.5 12.5 14.5 14"/></g></svg>
<div class="abs" style="left:421px;top:65px;width:131px;height:17px;box-sizing:border-box;border:1px solid #b2c2e2;background:#fff;box-shadow:0 0 0 1px #ebeff6"></div>
<div class="abs" style="left:538px;top:67px;width:13px;height:13px;box-sizing:border-box;border:1px solid #c8d6fb;border-radius:2px;background:linear-gradient(135deg,#dde8fe,#b6c9f8)"></div>
<svg class="ic" style="left:541px;top:71.5px" width="8" height="5" viewBox="0 0 8 5" ><path d="M0.8 0.8L3.6 3.6L6.4 0.8" fill="none" stroke="#28386c" stroke-width="1.7"/></svg>
<div id="rulerrow" class="abs"></div>
<div id="gray" class="abs"></div>
<div id="page" class="abs"></div>
<div id="lbtn" class="abs"></div>
<div class="abs" style="left:10.4px;top:93px;width:1.6px;height:4.5px;background:#111"></div><div class="abs" style="left:10.4px;top:96px;width:5px;height:1.5px;background:#111"></div>
<div id="hruler" class="abs">
<div class="abs rn" style="left:4.5px;top:1px">0</div>
<div class="abs" style="left:21.6px;top:6px;width:1px;height:1px;background:#000"></div>
<div class="abs" style="left:29.2px;top:4px;width:1px;height:4px;background:#000"></div>
<div class="abs" style="left:36.9px;top:6px;width:1px;height:1px;background:#000"></div>
<div class="abs rn" style="left:35.0px;top:1px">1</div>
<div class="abs" style="left:52.1px;top:6px;width:1px;height:1px;background:#000"></div>
<div class="abs" style="left:59.8px;top:4px;width:1px;height:4px;background:#000"></div>
<div class="abs" style="left:67.4px;top:6px;width:1px;height:1px;background:#000"></div>
<div class="abs rn" style="left:65.5px;top:1px">2</div>
<div class="abs" style="left:82.6px;top:6px;width:1px;height:1px;background:#000"></div>
<div class="abs" style="left:90.2px;top:4px;width:1px;height:4px;background:#000"></div>
<div class="abs" style="left:97.9px;top:6px;width:1px;height:1px;background:#000"></div>
<div class="abs rn" style="left:96.0px;top:1px">3</div>
<div class="abs" style="left:113.1px;top:6px;width:1px;height:1px;background:#000"></div>
<div class="abs" style="left:120.8px;top:4px;width:1px;height:4px;background:#000"></div>
<div class="abs" style="left:128.4px;top:6px;width:1px;height:1px;background:#000"></div>
<div class="abs rn" style="left:126.5px;top:1px">4</div>
<div class="abs" style="left:143.6px;top:6px;width:1px;height:1px;background:#000"></div>
<div class="abs" style="left:151.2px;top:4px;width:1px;height:4px;background:#000"></div>
<div class="abs" style="left:158.9px;top:6px;width:1px;height:1px;background:#000"></div>
<div class="abs rn" style="left:157.0px;top:1px">5</div>
<div class="abs" style="left:174.1px;top:6px;width:1px;height:1px;background:#000"></div>
<div class="abs" style="left:181.8px;top:4px;width:1px;height:4px;background:#000"></div>
<div class="abs" style="left:189.4px;top:6px;width:1px;height:1px;background:#000"></div>
<div class="abs rn" style="left:187.5px;top:1px">6</div>
<div class="abs" style="left:204.6px;top:6px;width:1px;height:1px;background:#000"></div>
<div class="abs" style="left:212.2px;top:4px;width:1px;height:4px;background:#000"></div>
<div class="abs" style="left:219.9px;top:6px;width:1px;height:1px;background:#000"></div>
<div class="abs rn" style="left:218.0px;top:1px">7</div>
<div class="abs" style="left:235.1px;top:6px;width:1px;height:1px;background:#000"></div>
<div class="abs" style="left:242.8px;top:4px;width:1px;height:4px;background:#000"></div>
<div class="abs" style="left:250.4px;top:6px;width:1px;height:1px;background:#000"></div>
<div class="abs rn" style="left:248.5px;top:1px">8</div>
<div class="abs" style="left:265.6px;top:6px;width:1px;height:1px;background:#000"></div>
<div class="abs" style="left:273.2px;top:4px;width:1px;height:4px;background:#000"></div>
<div class="abs" style="left:280.9px;top:6px;width:1px;height:1px;background:#000"></div>
<div class="abs rn" style="left:279.0px;top:1px">9</div>
<div class="abs" style="left:296.1px;top:6px;width:1px;height:1px;background:#000"></div>
<div class="abs" style="left:303.8px;top:4px;width:1px;height:4px;background:#000"></div>
<div class="abs" style="left:311.4px;top:6px;width:1px;height:1px;background:#000"></div>
<div class="abs rn" style="left:309.5px;top:1px">10</div>
<div class="abs" style="left:326.6px;top:6px;width:1px;height:1px;background:#000"></div>
<div class="abs" style="left:334.2px;top:4px;width:1px;height:4px;background:#000"></div>
<div class="abs" style="left:341.9px;top:6px;width:1px;height:1px;background:#000"></div>
<div class="abs rn" style="left:340.0px;top:1px">11</div>
<div class="abs" style="left:357.1px;top:6px;width:1px;height:1px;background:#000"></div>
<div class="abs" style="left:364.8px;top:4px;width:1px;height:4px;background:#000"></div>
<div class="abs" style="left:372.4px;top:6px;width:1px;height:1px;background:#000"></div>
<div class="abs rn" style="left:370.5px;top:1px">12</div>
<div class="abs" style="left:387.6px;top:6px;width:1px;height:1px;background:#000"></div>
<div class="abs" style="left:395.2px;top:4px;width:1px;height:4px;background:#000"></div>
<div class="abs" style="left:402.9px;top:6px;width:1px;height:1px;background:#000"></div>
<div class="abs rn" style="left:401.0px;top:1px">13</div>
<div class="abs" style="left:418.1px;top:6px;width:1px;height:1px;background:#000"></div>
<div class="abs" style="left:425.8px;top:4px;width:1px;height:4px;background:#000"></div>
<div class="abs" style="left:433.4px;top:6px;width:1px;height:1px;background:#000"></div>
<div class="abs rn" style="left:431.5px;top:1px">14</div>
<div class="abs" style="left:448.6px;top:6px;width:1px;height:1px;background:#000"></div>
<div class="abs" style="left:456.2px;top:4px;width:1px;height:4px;background:#000"></div>
<div class="abs" style="left:463.9px;top:6px;width:1px;height:1px;background:#000"></div>
<div class="abs rn" style="left:462.0px;top:1px">15</div>
<div class="abs" style="left:479.1px;top:6px;width:1px;height:1px;background:#000"></div>
<div class="abs" style="left:486.8px;top:4px;width:1px;height:4px;background:#000"></div>
<div class="abs" style="left:494.4px;top:6px;width:1px;height:1px;background:#000"></div>
<div class="abs rn" style="left:492.5px;top:1px">16</div>
<div class="abs" style="left:509.6px;top:6px;width:1px;height:1px;background:#000"></div>
<div class="abs" style="left:517.2px;top:4px;width:1px;height:4px;background:#000"></div>
<div class="abs" style="left:524.9px;top:6px;width:1px;height:1px;background:#000"></div>
<div class="abs rn" style="left:523.0px;top:1px">17</div>
<div class="abs" style="left:540.1px;top:6px;width:1px;height:1px;background:#000"></div>
<div class="abs" style="left:547.8px;top:4px;width:1px;height:4px;background:#000"></div>
<div class="abs" style="left:555.4px;top:6px;width:1px;height:1px;background:#000"></div>
<div class="abs rn" style="left:553.5px;top:1px">18</div>
<div class="abs" style="left:570.6px;top:6px;width:1px;height:1px;background:#000"></div>
<div class="abs" style="left:578.2px;top:4px;width:1px;height:4px;background:#000"></div>
<div class="abs" style="left:585.9px;top:6px;width:1px;height:1px;background:#000"></div>
</div>
<div id="vruler" class="abs">
<div class="abs rn" style="left:-3px;top:11.4px">0</div>
<div class="abs" style="left:7px;top:23.0px;width:1px;height:1px;background:#000"></div>
<div class="abs" style="left:5px;top:30.7px;width:4px;height:1px;background:#000"></div>
<div class="abs" style="left:7px;top:38.3px;width:1px;height:1px;background:#000"></div>
<div class="abs rn" style="left:-3px;top:41.9px">1</div>
<div class="abs" style="left:7px;top:53.5px;width:1px;height:1px;background:#000"></div>
<div class="abs" style="left:5px;top:61.2px;width:4px;height:1px;background:#000"></div>
<div class="abs" style="left:7px;top:68.8px;width:1px;height:1px;background:#000"></div>
<div class="abs rn" style="left:-3px;top:72.4px">2</div>
<div class="abs" style="left:7px;top:84.0px;width:1px;height:1px;background:#000"></div>
<div class="abs" style="left:5px;top:91.7px;width:4px;height:1px;background:#000"></div>
<div class="abs" style="left:7px;top:99.3px;width:1px;height:1px;background:#000"></div>
<div class="abs rn" style="left:-3px;top:102.9px">3</div>
<div class="abs" style="left:7px;top:114.5px;width:1px;height:1px;background:#000"></div>
<div class="abs" style="left:5px;top:122.2px;width:4px;height:1px;background:#000"></div>
<div class="abs" style="left:7px;top:129.8px;width:1px;height:1px;background:#000"></div>
<div class="abs rn" style="left:-3px;top:133.4px">4</div>
<div class="abs" style="left:7px;top:145.0px;width:1px;height:1px;background:#000"></div>
<div class="abs" style="left:5px;top:152.7px;width:4px;height:1px;background:#000"></div>
<div class="abs" style="left:7px;top:160.3px;width:1px;height:1px;background:#000"></div>
<div class="abs rn" style="left:-3px;top:163.9px">5</div>
<div class="abs" style="left:7px;top:175.5px;width:1px;height:1px;background:#000"></div>
<div class="abs" style="left:5px;top:183.2px;width:4px;height:1px;background:#000"></div>
<div class="abs" style="left:7px;top:190.8px;width:1px;height:1px;background:#000"></div>
<div class="abs rn" style="left:-3px;top:194.4px">6</div>
<div class="abs" style="left:7px;top:206.0px;width:1px;height:1px;background:#000"></div>
<div class="abs" style="left:5px;top:213.7px;width:4px;height:1px;background:#000"></div>
<div class="abs" style="left:7px;top:221.3px;width:1px;height:1px;background:#000"></div>
<div class="abs rn" style="left:-3px;top:224.9px">7</div>
<div class="abs" style="left:7px;top:236.5px;width:1px;height:1px;background:#000"></div>
<div class="abs" style="left:5px;top:244.2px;width:4px;height:1px;background:#000"></div>
<div class="abs" style="left:7px;top:251.8px;width:1px;height:1px;background:#000"></div>
<div class="abs rn" style="left:-3px;top:255.4px">8</div>
<div class="abs" style="left:7px;top:267.0px;width:1px;height:1px;background:#000"></div>
<div class="abs" style="left:5px;top:274.6px;width:4px;height:1px;background:#000"></div>
<div class="abs" style="left:7px;top:282.3px;width:1px;height:1px;background:#000"></div>
<div class="abs rn" style="left:-3px;top:285.9px">9</div>
<div class="abs" style="left:7px;top:297.5px;width:1px;height:1px;background:#000"></div>
<div class="abs" style="left:5px;top:305.1px;width:4px;height:1px;background:#000"></div>
<div class="abs" style="left:7px;top:312.8px;width:1px;height:1px;background:#000"></div>
</div>
<div class="abs" style="left:127.6px;top:122px;width:0;height:252px;border-left:1px dotted #e4e4e4"></div>
<div class="abs" style="left:38px;top:181.4px;width:546px;height:0;border-top:1px dotted #e4e4e4"></div>
<div class="abs fr" style="left:131px;top:200px;width:146px;height:48px"></div>
<div class="abs fr" style="left:255px;top:217px;width:205px;height:137px"></div>
<div class="abs" style="left:135px;top:205px;font-family:'DejaVu Sans','Liberation Sans',sans-serif;font-size:17px;line-height:21px;white-space:nowrap"><span class="sx" id="blok" style="transform:scaleX(0.975)">Блок текста</span></div>
<div class="abs" style="left:259px;top:222px;font-family:'Liberation Serif',serif;font-size:19.4px;line-height:21px;white-space:nowrap"><span class="sx" id="www" style="transform:scaleX(1)">www.ixbt.com</span></div>
<div id="vs" class="abs"></div>
<div id="hs" class="abs"></div>
<div class="abs sbtn" style="left:585px;top:87px;width:11.5px;height:11.5px"></div>
<svg class="ic" style="left:587px;top:89.5px" width="8" height="6" viewBox="0 0 8 6"><path d="M0.8 4.6L3.8 1.4L6.8 4.6" fill="none" stroke="#3c4c80" stroke-width="1.6"/></svg>
<div class="abs sbtn" style="left:585px;top:99px;width:11.5px;height:6px"></div>
<div class="abs sbtn" style="left:585px;top:321px;width:11.5px;height:12px"></div>
<svg class="ic" style="left:587px;top:324.5px" width="8" height="6" viewBox="0 0 8 6"><path d="M0.8 1.2L3.8 4.4L6.8 1.2" fill="none" stroke="#3c4c80" stroke-width="1.6"/></svg>
<div class="abs" style="left:585px;top:334.8px;width:11.5px;height:11.6px;box-sizing:border-box;background:#ece9d8;border:1px solid #fff;border-right-color:#aca899;border-bottom-color:#aca899"></div>
<div class="abs" style="left:585px;top:347px;width:11.5px;height:11.6px;box-sizing:border-box;background:#ece9d8;border:1px solid #fff;border-right-color:#aca899;border-bottom-color:#aca899"></div>
<div class="abs" style="left:585px;top:359.3px;width:11.5px;height:11.6px;box-sizing:border-box;background:#ece9d8;border:1px solid #fff;border-right-color:#aca899;border-bottom-color:#aca899"></div>
<svg class="ic" style="left:588.6px;top:338.2px" width="4.4" height="5.4" viewBox="0 0 6 7"><path d="M3 0L5.6 2.6H0.4ZM3 2.8L5.6 5.4H0.4Z" fill="#111"/><rect x="0.4" y="5.6" width="5.2" height="1" fill="#111"/></svg>
<div class="abs" style="left:588.8px;top:351px;width:4px;height:4px;border-radius:50%;background:radial-gradient(circle at 40% 35%,#ff70a0,#e01040 60%,#a00828)"></div>
<svg class="ic" style="left:588.6px;top:362.4px" width="4.4" height="5.4" viewBox="0 0 6 7"><rect x="0.4" y="0.2" width="5.2" height="1" fill="#111"/><path d="M3 4.2L5.6 1.6H0.4ZM3 7L5.6 4.4H0.4Z" fill="#111"/></svg>
<div class="abs" style="left:584px;top:372px;width:13px;height:1.6px;background:#5c5c5c"></div>
<div class="abs" style="left:584px;top:373.6px;width:13px;height:13.4px;background:#ece9d8"></div>
<div class="abs sbtn" style="left:4px;top:374.3px;width:11.5px;height:12px"></div>
<svg class="ic" style="left:6.5px;top:376.5px" width="6" height="8" viewBox="0 0 6 8"><path d="M4.6 0.8L1.4 3.8L4.6 6.8" fill="none" stroke="#3c4c80" stroke-width="1.6"/></svg>
<div class="abs sbtn" style="left:18px;top:374.3px;width:474px;height:12px"></div>
<div class="abs" style="left:252px;top:378px;width:7px;height:5px;background:repeating-linear-gradient(to right,#e8effe 0,#e8effe 1px,#9cb4ec 1px,#9cb4ec 2px)"></div>
<div class="abs sbtn" style="left:571px;top:374.3px;width:11.5px;height:12px"></div>
<svg class="ic" style="left:574.5px;top:376.5px" width="6" height="8" viewBox="0 0 6 8"><path d="M1.2 0.8L4.4 3.8L1.2 6.8" fill="none" stroke="#3c4c80" stroke-width="1.6"/></svg>
<div id="status" class="abs"></div>
<div class="abs sp" style="left:10px;width:191px"></div>
<div class="abs sp" style="left:202.5px;width:79px"></div>
<div class="abs sp" style="left:286.5px;width:58px"></div>
<div class="abs sp" style="left:348.5px;width:52.5px"></div>
<div class="abs sp" style="left:406.5px;width:89px"></div>
<div class="abs sp" style="left:501px;width:47.5px"></div>
<div class="abs sp" style="left:555.5px;width:33px"></div>
<div class="abs st" style="left:208.0px"><span class="sx stx" style="transform:scaleX(0.924)">15,08 / 3,15 cm</span></div>
<div class="abs st" style="left:351.7px"><span class="sx stx" style="transform:scaleX(0.925)">Глава 1</span></div>
<div class="abs st" style="left:409.7px"><span class="sx stx" style="transform:scaleX(0.914)">Страница 1 из 27</span></div>
<div class="abs st" style="left:563.7px"><span class="sx stx" style="transform:scaleX(0.935)">ВСТ</span></div>
<div id="bl" class="abs"></div><div id="br" class="abs"></div><div id="bb" class="abs"></div>
</div>
</body>
</html>
